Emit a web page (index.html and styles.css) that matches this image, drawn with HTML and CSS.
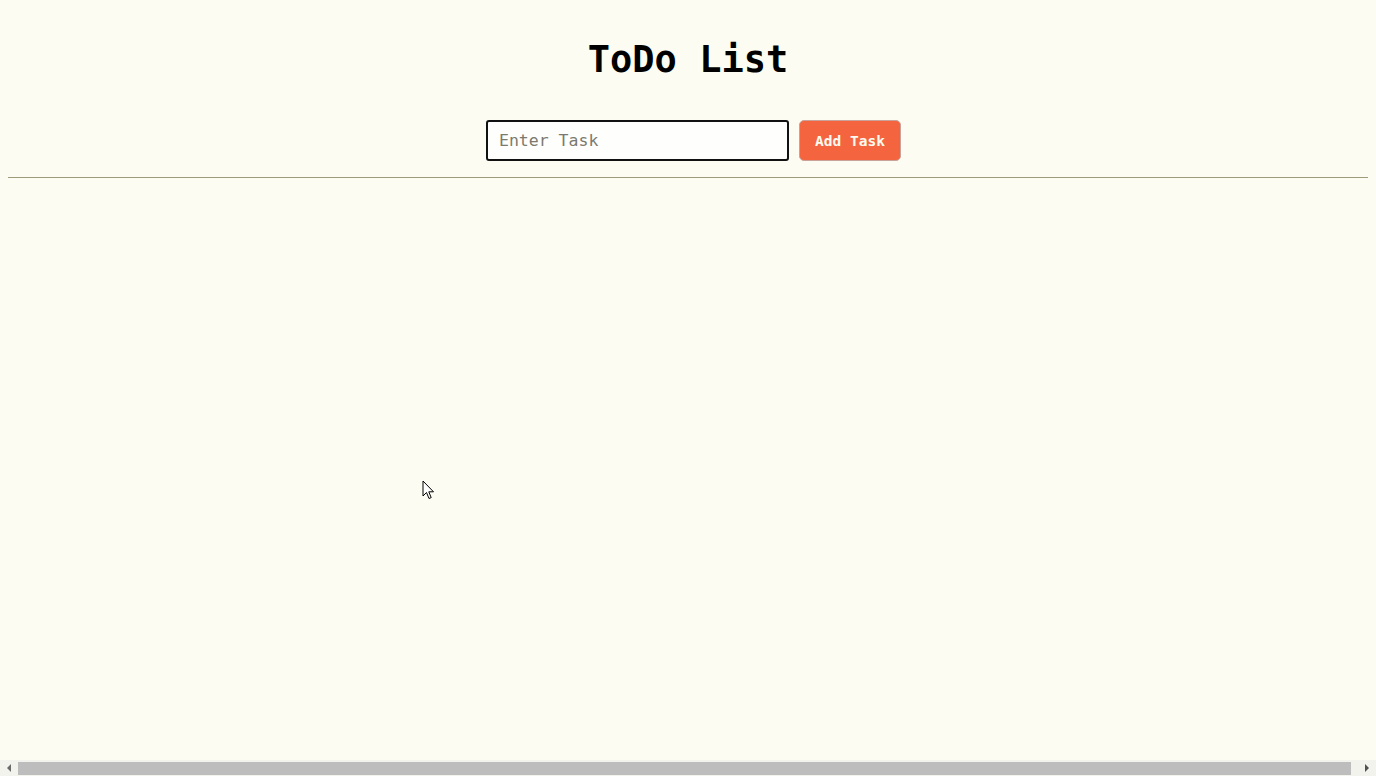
FILE: index.html
```html
<!DOCTYPE html>
<html lang="en">
<head>
<meta charset="utf-8">
<title>ToDo List</title>
<link rel="stylesheet" href="styles.css">
</head>
<body>
  <h1 class="title">ToDo List</h1>
  <div class="task-form">
    <input class="task-input" type="text" placeholder="Enter Task">
    <button class="add-btn" type="button">Add Task</button>
  </div>
  <div class="divider"></div>
  <ul class="task-list"></ul>
  <svg class="pointer" width="14" height="21" viewBox="0 0 14 21" aria-hidden="true">
    <path d="M1 1 L1 16 L4.5 12.5 L7 18.5 L9.2 17.6 L6.8 11.8 L11.5 11.8 Z" fill="#fff" stroke="#000" stroke-width="1" stroke-linejoin="miter"/>
  </svg>
  <div class="hscroll" aria-hidden="true">
    <span class="hscroll-arrow hscroll-left"></span>
    <span class="hscroll-thumb"></span>
    <span class="hscroll-arrow hscroll-right"></span>
  </div>
</body>
</html>
```

FILE: styles.css
```css
html {
  background: #fcfcf3;
  overflow: hidden;
}
body {
  margin: 8px;
  font-family: "DejaVu Sans Mono", monospace;
  color: #000;
  background: #fcfcf3;
}
.title {
  margin: 30px 0 0;
  font-size: 37px;
  line-height: 44px;
  font-weight: bold;
  text-align: center;
}
.task-form {
  display: flex;
  justify-content: center;
  align-items: center;
  gap: 10px;
  margin-top: 38px;
  padding-left: 11px;
}
.task-input {
  box-sizing: border-box;
  width: 303px;
  height: 41px;
  border: 2px solid #111;
  border-radius: 3px;
  padding: 0 11px;
  font-family: "DejaVu Sans Mono", monospace;
  font-size: 16.5px;
  background: #fefefc;
  outline: none;
}
.task-input::placeholder {
  color: #7a7a6e;
}
.add-btn {
  box-sizing: border-box;
  width: 102px;
  height: 41px;
  border: 1px solid #c9a39a;
  border-radius: 5px;
  background: #f4653f;
  color: #fffbee;
  font-family: "DejaVu Sans Mono", monospace;
  font-weight: bold;
  font-size: 14.5px;
  padding: 0;
}
.divider {
  width: calc(100% + 24px);
  margin-top: 16px;
  height: 1px;
  background: #9c9b7c;
}
.task-list {
  margin: 0;
  padding: 0;
  list-style: none;
}
.pointer {
  position: absolute;
  left: 422px;
  top: 480px;
}
.hscroll {
  position: fixed;
  left: 0;
  right: 0;
  bottom: 0;
  height: 16px;
  background: #f3f3ee;
  display: flex;
  align-items: center;
}
.hscroll-arrow {
  width: 18px;
  height: 16px;
  display: flex;
  align-items: center;
  justify-content: center;
}
.hscroll-arrow::before {
  content: "";
  width: 0;
  height: 0;
  border-top: 4px solid transparent;
  border-bottom: 4px solid transparent;
}
.hscroll-left::before {
  border-right: 4px solid #6a6a6a;
}
.hscroll-right::before {
  border-left: 4px solid #505050;
}
.hscroll-thumb {
  flex: 1;
  height: 13px;
  margin-right: 7px;
  background: #bdbdbd;
}
```
